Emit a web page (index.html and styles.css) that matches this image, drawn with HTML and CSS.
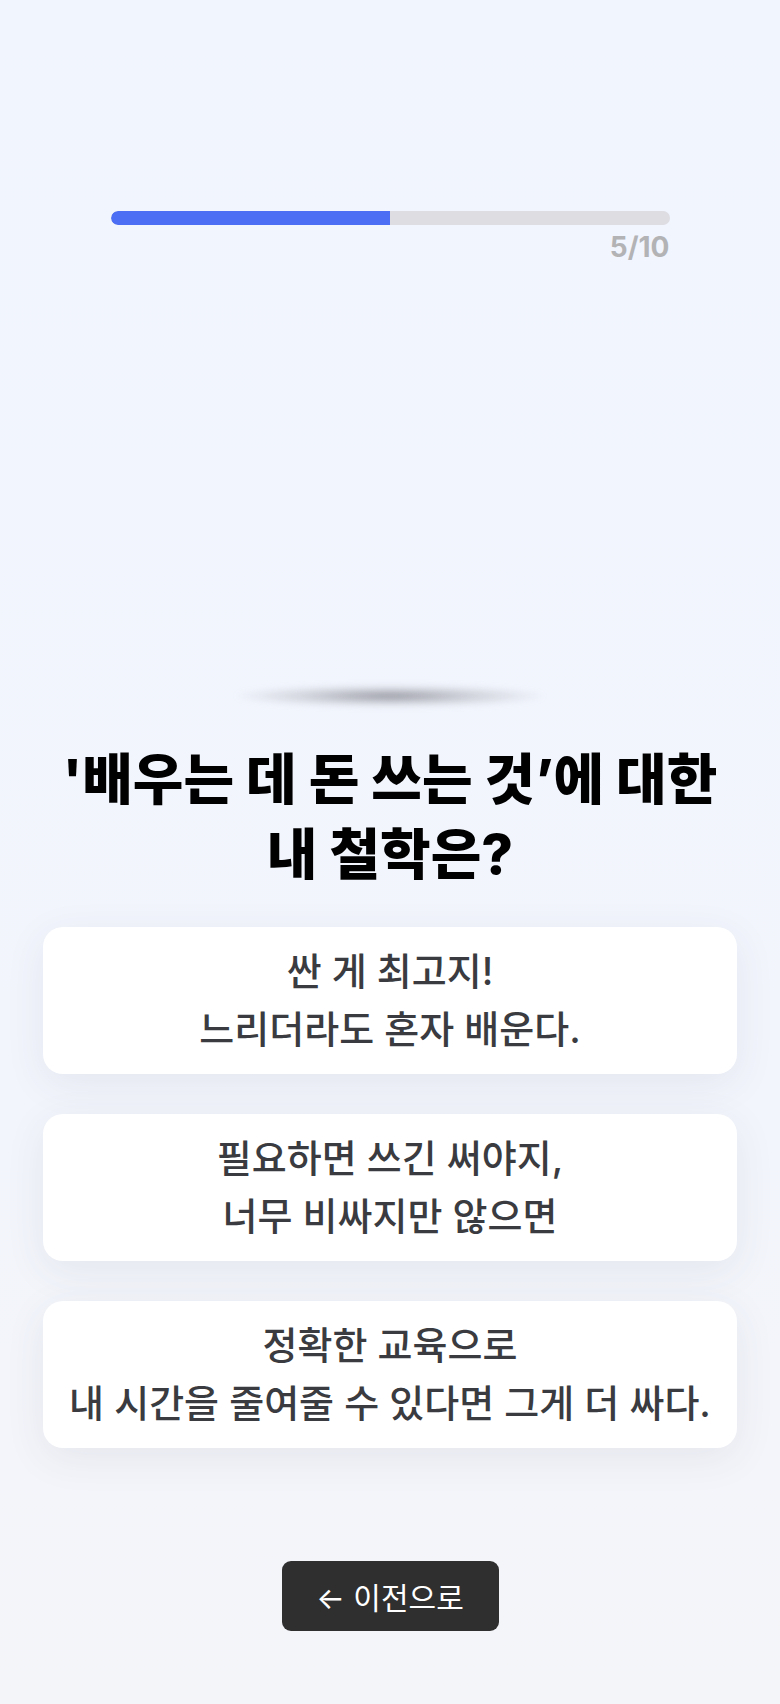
FILE: index.html
```html
<!DOCTYPE html>
<html lang="ko">
<head>
    <meta charset="UTF-8">
    <title>배움 성향 테스트</title>
    <link rel="stylesheet" href="styles.css">
</head>
<body>
    <div class="page">
        <div class="progress">
            <div class="progress-track">
                <div class="progress-fill" style="width: 50%;"></div>
            </div>
            <div class="progress-count">5/10</div>
        </div>

        <div class="figure">
            <div class="figure-shadow"></div>
        </div>

        <h1 class="question">'배우는 데 돈 쓰는 것’에 대한<br>내 철학은?</h1>

        <div class="answers">
            <button class="answer">싼 게 최고지!<br>느리더라도 혼자 배운다.</button>
            <button class="answer">필요하면 쓰긴 써야지,<br>너무 비싸지만 않으면</button>
            <button class="answer">정확한 교육으로<br>내 시간을 줄여줄 수 있다면 그게 더 싸다.</button>
        </div>

        <button class="back">← 이전으로</button>
    </div>
</body>
</html>
```

FILE: styles.css
```css
:root {
    --primary: #4b6ef5;
    --track: #dddde2;
    --text: #3a3b40;
    --dark: #2f2f2f;
}

body {
    margin: 0;
    font-family: 'Inter', 'Noto Sans CJK KR', sans-serif;
    background: linear-gradient(180deg, #f1f5fe 0%, #f2f5fc 60%, #f4f5f9 100%);
    min-height: 100vh;
}

.page {
    display: flex;
    flex-direction: column;
    align-items: center;
    padding: 0 43px;
}

.progress {
    width: 559px;
    margin-top: 211px;
}

.progress-track {
    height: 14px;
    border-radius: 7px;
    background: var(--track);
    overflow: hidden;
}

.progress-fill {
    height: 100%;
    background: var(--primary);
    border-radius: 7px 0 0 7px;
}

.progress-count {
    text-align: right;
    margin-top: 6px;
    font-size: 28px;
    font-weight: 700;
    color: #b3b3b6;
    line-height: 32px;
}

/* empty stage with the floor shadow under the character */
.figure {
    height: 444px;
    width: 100%;
    display: flex;
    align-items: flex-end;
    justify-content: center;
}

.figure-shadow {
    width: 310px;
    height: 22px;
    border-radius: 50%;
    background: radial-gradient(ellipse at center, rgba(120,120,130,0.75) 0%, rgba(150,150,160,0.35) 40%, rgba(200,205,215,0) 72%);
    filter: blur(3px);
}

.question {
    margin: 35px 0 0;
    font-size: 55px;
    font-weight: 800;
    line-height: 75px;
    text-align: center;
    color: #000;
}

.answers {
    width: 100%;
    display: flex;
    flex-direction: column;
    gap: 40px;
    margin-top: 35px;
}

.answer {
    width: 100%;
    padding: 15px 10px 16px;
    border: none;
    border-radius: 20px;
    background: white;
    box-shadow: 0 10px 40px rgba(60,65,90,0.08);
    font-family: inherit;
    font-size: 38px;
    font-weight: 500;
    line-height: 58px;
    color: var(--text);
    cursor: pointer;
}

.back {
    margin-top: 113px;
    width: 217px;
    height: 70px;
    border: none;
    border-radius: 9px;
    background: var(--dark);
    color: white;
    font-family: inherit;
    font-size: 30px;
    font-weight: 400;
    cursor: pointer;
}
```
